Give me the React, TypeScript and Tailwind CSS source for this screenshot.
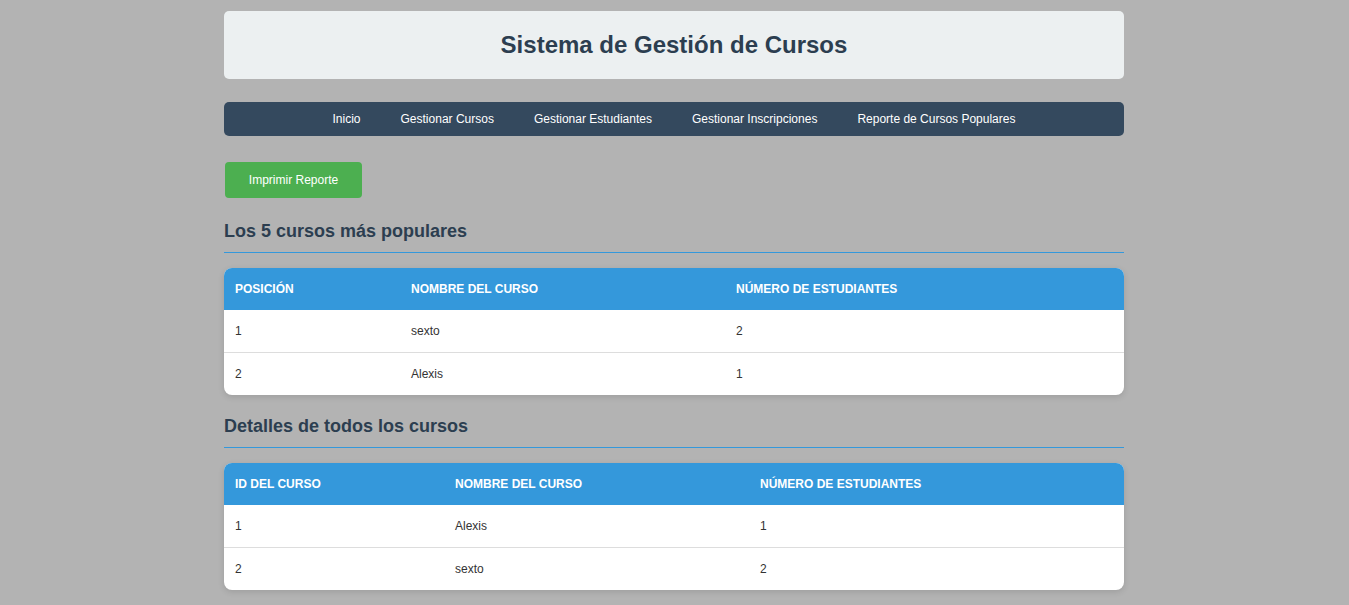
import React from "react";

const navItems = [
  "Inicio",
  "Gestionar Cursos",
  "Gestionar Estudiantes",
  "Gestionar Inscripciones",
  "Reporte de Cursos Populares",
];

type Row = [string, string, string];

function DataTable({
  headers,
  widths,
  rows,
}: {
  headers: [string, string, string];
  widths: [string, string, string];
  rows: Row[];
}) {
  return (
    <div className="mt-[15px] overflow-hidden rounded-lg bg-white shadow-[0_2px_6px_rgba(0,0,0,0.12)]">
      <table className="w-full table-fixed border-collapse text-left text-[12px] leading-[18px]">
        <thead>
          <tr className="bg-[#3498db] text-white">
            {headers.map((h, i) => (
              <th
                key={h}
                className={`${widths[i]} px-[11px] py-3 font-bold uppercase`}
              >
                {h}
              </th>
            ))}
          </tr>
        </thead>
        <tbody>
          {rows.map((r, ri) => (
            <tr
              key={ri}
              className={
                ri < rows.length - 1 ? "border-b border-b-[#dddddd]" : ""
              }
            >
              {r.map((c, ci) => (
                <td key={ci} className="px-[11px] py-3 text-[#333333]">
                  {c}
                </td>
              ))}
            </tr>
          ))}
        </tbody>
      </table>
    </div>
  );
}

export default function App() {
  return (
    <div
      className="min-h-[605px] bg-[#b3b3b3] pt-[11px]"
      style={{ fontFamily: '"Liberation Sans", Arial, sans-serif' }}
    >
      <div className="ml-[224px] w-[900px]">
        <header className="rounded-[5px] bg-[#ecf0f1] py-5 text-center">
          <h1 className="text-[24px] font-bold leading-[28px] text-[#2c3e50]">
            Sistema de Gestión de Cursos
          </h1>
        </header>

        <nav className="mt-[23px] flex justify-center rounded-[5px] bg-[#34495e] py-[10px]">
          {navItems.map((n) => (
            <a
              key={n}
              href="#"
              className="px-5 text-[12px] leading-[14px] text-white"
            >
              {n}
            </a>
          ))}
        </nav>

        <button className="mt-[26px] ml-px h-9 w-[137px] rounded bg-[#4caf50] text-[12px] text-white">
          Imprimir Reporte
        </button>

        <h2 className="mt-[22px] border-b border-b-[#3498db] pb-[10px] text-[18px] font-bold leading-[22px] text-[#2c3e50]">
          Los 5 cursos más populares
        </h2>

        <DataTable
          headers={["Posición", "Nombre del Curso", "Número de Estudiantes"]}
          widths={["w-[176px]", "w-[325px]", "w-auto"]}
          rows={[
            ["1", "sexto", "2"],
            ["2", "Alexis", "1"],
          ]}
        />

        <h2 className="mt-[20px] border-b border-b-[#3498db] pb-[10px] text-[18px] font-bold leading-[22px] text-[#2c3e50]">
          Detalles de todos los cursos
        </h2>

        <DataTable
          headers={["ID del Curso", "Nombre del Curso", "Número de Estudiantes"]}
          widths={["w-[220px]", "w-[305px]", "w-auto"]}
          rows={[
            ["1", "Alexis", "1"],
            ["2", "sexto", "2"],
          ]}
        />
      </div>
    </div>
  );
}
